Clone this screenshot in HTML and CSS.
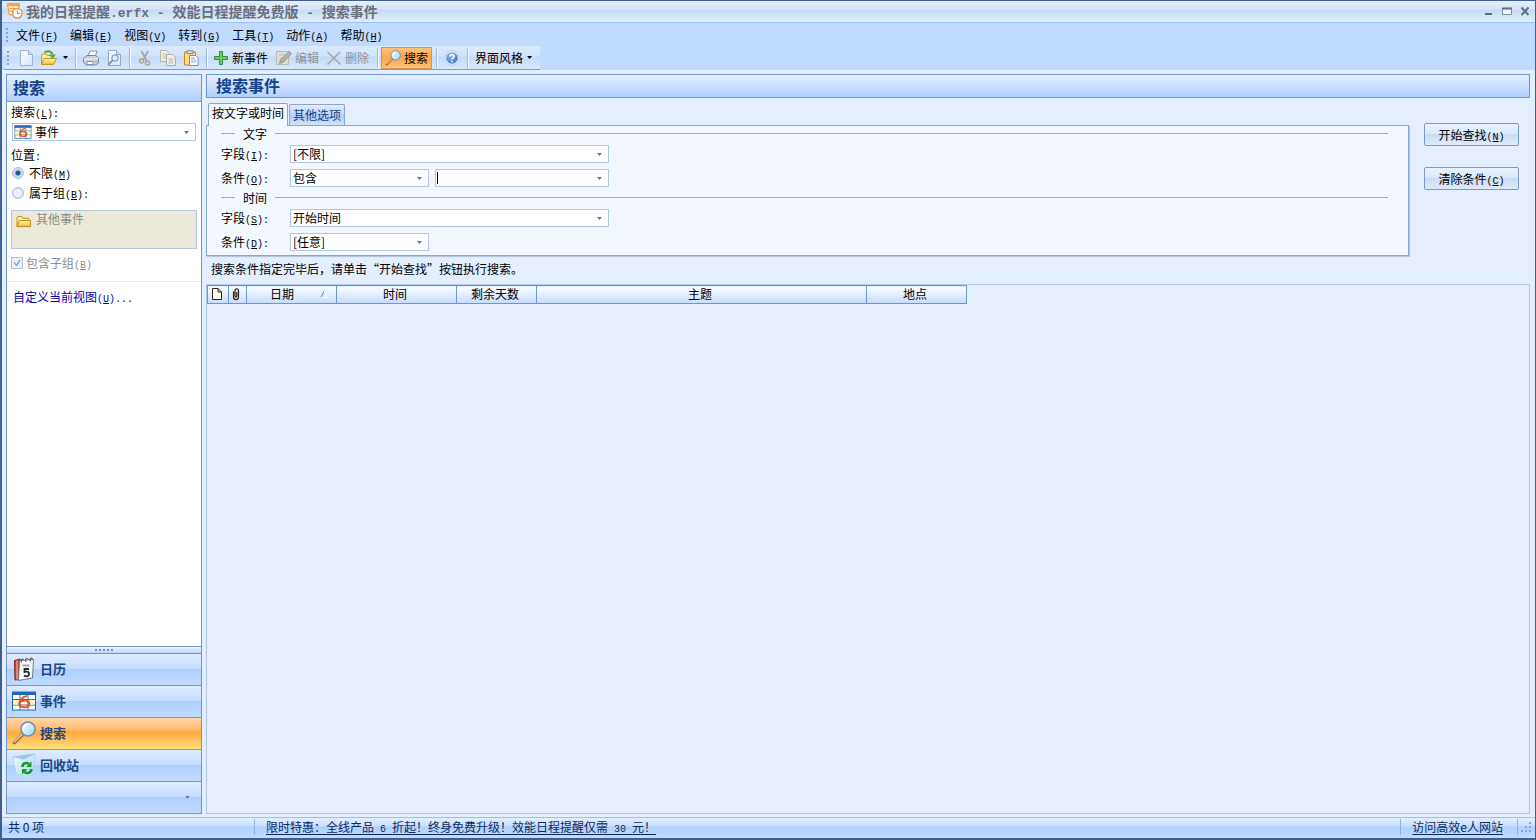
FILE: index.html
```html
<!DOCTYPE html>
<html lang="zh-CN">
<head>
<meta charset="utf-8">
<title>我的日程提醒.erfx - 效能日程提醒免费版 - 搜索事件</title>
<link rel="stylesheet" href="styles.css">
</head>
<body>
<svg class="defs" aria-hidden="true">
  <defs>
    <linearGradient id="gFolder" x1="0" y1="0" x2="0" y2="1"><stop offset="0" stop-color="#fff3a8"/><stop offset="1" stop-color="#eebc3c"/></linearGradient>
    <linearGradient id="gLens" x1="0" y1="0" x2="1" y2="1"><stop offset="0" stop-color="#ffffff"/><stop offset="1" stop-color="#9fd2f5"/></linearGradient>
    <linearGradient id="gPage" x1="0" y1="0" x2="1" y2="1"><stop offset="0" stop-color="#ffffff"/><stop offset="1" stop-color="#d5e5f8"/></linearGradient>
    <linearGradient id="gBin" x1="0" y1="0" x2="1" y2="1"><stop offset="0" stop-color="#f2fbff"/><stop offset="1" stop-color="#a9d8f3"/></linearGradient>
    <radialGradient id="gHelp" cx="0.4" cy="0.3" r="0.8"><stop offset="0" stop-color="#8fb4ee"/><stop offset="1" stop-color="#3d6fc4"/></radialGradient>
    <symbol id="lens" viewBox="0 0 24 24">
      <path d="M2.500 21.500 10.500 13.500" stroke="#94694a" stroke-width="3.600" stroke-linecap="round"/>
      <path d="M2.500 20.800 10 13.500" stroke="#efb47a" stroke-width="2" stroke-linecap="round"/>
      <circle cx="16" cy="8" r="7" fill="url(#gLens)" stroke="#6c8fb8" stroke-width="1.500"/>
      <path d="M11.500 7.500a4.500 4.500 0 0 1 4-4" fill="none" stroke="#fff" stroke-width="1.600"/>
    </symbol>
    <symbol id="grid" viewBox="0 0 24 20">
      <rect x="0.500" y="1" width="23" height="18" fill="#fff" stroke="#2667ae"/>
      <path d="M0 1h24v3H0z" fill="#1f66b5"/>
      <path d="M1 8.500h22M1 14h22M8 4v15M16 4v15" stroke="#3f7a62" fill="none"/>
      <path d="M1 9h6.500v4.500H1zM16.500 9h6v4.500h-6z" fill="#fff3c4"/>
      <path d="M15 5C11 5.500 7.500 9 7.200 13c0 4 9.500 4.500 10 .3.300-4-5.500-5.300-9.500-2" fill="none" stroke="#e8502a" stroke-width="2"/>
    </symbol>
    <symbol id="folder" viewBox="0 0 16 14">
      <path d="M1 12.500v-10l1-1h4l1.500 2H13l1 1v1.500" fill="#ffeb98" stroke="#b9860f"/>
      <path d="M1 12.500 3.500 6H15.500V12.500z" fill="url(#gFolder)" stroke="#b9860f"/>
    </symbol>
  </defs>
</svg>

<div class="window">
  <header class="titlebar">
    <svg class="app-icon" viewBox="0 0 18 18">
      <path d="M1.500 1.500h12.500l-1.500 12H3.500z" fill="#fff5df" stroke="#df8a31"/>
      <path d="M1 1h13.500v3.500H1.500z" fill="#f2a74a"/>
      <path d="M4 7h7M4 9.500h4" stroke="#df8a31"/>
      <circle cx="12" cy="12" r="5" fill="#fffdf8" stroke="#e08c3e" stroke-width="1.400"/>
      <path d="M12 9v3.200h2.700" fill="none" stroke="#7489a5"/>
    </svg>
    <h1 class="title">我的日程提醒<span class="tm">.erfx - </span>效能日程提醒免费版<span class="tm"> - </span>搜索事件</h1>
    <div class="win-buttons">
      <button aria-label="最小化"><svg viewBox="0 0 10 10"><path d="M1 8h7" stroke="#5f6d82" stroke-width="2"/></svg></button>
      <button aria-label="最大化"><svg viewBox="0 0 10 10"><path d="M.5 2.500h9v6h-9z" fill="#eef4fc" stroke="#7e8ca0"/><path d="M0 2.500h10" stroke="#5f6d82" stroke-width="2"/></svg></button>
      <button aria-label="关闭"><svg viewBox="0 0 10 10"><path d="M1.500 1.500l7 7.500M8.500 1.500l-7 7.500" stroke="#5f6d82" stroke-width="2"/></svg></button>
    </div>
  </header>

  <nav class="menubar" aria-label="菜单">
    <span class="grip"></span>
    <button>文件<span class="key">(<u>F</u>)</span></button>
    <button>编辑<span class="key">(<u>E</u>)</span></button>
    <button>视图<span class="key">(<u>V</u>)</span></button>
    <button>转到<span class="key">(<u>G</u>)</span></button>
    <button>工具<span class="key">(<u>T</u>)</span></button>
    <button>动作<span class="key">(<u>A</u>)</span></button>
    <button>帮助<span class="key">(<u>H</u>)</span></button>
  </nav>

  <div class="toolbar-row">
    <div class="toolbar" role="toolbar">
      <span class="grip"></span>
      <button class="tool" aria-label="新建"><svg viewBox="0 0 16 16"><path d="M2.500.5h8l4 4v11h-12z" fill="url(#gPage)" stroke="#9db3d4"/><path d="M10.500.5v4h4" fill="#c9daf0" stroke="#9db3d4"/></svg></button>
      <button class="tool" aria-label="打开"><svg viewBox="0 0 16 16"><path d="M.5 14V5l1-1h4l1 1.500H12V14z" fill="#ffe88c" stroke="#c39a2c"/><path d="M.5 14.500 3 8.500h12.500l-3 6z" fill="url(#gFolder)" stroke="#c39a2c"/><path d="M3.500 2.500C7 0 11 1.500 11.500 4.500" fill="none" stroke="#4ba83c" stroke-width="2"/><path d="M8 4.500h7L11.500 9z" fill="#4fb33e"/></svg></button>
      <button class="tool drop" aria-label="打开列表"><i class="arrow"></i></button>
      <span class="sep"></span>
      <button class="tool" aria-label="打印"><svg viewBox="0 0 16 16"><path d="M5 6 7 1h7l-2 6z" fill="#fff" stroke="#8392ab"/><path d="M.5 8.500 4 5.500h9l2.500 3V13l-3 2h-9L.5 12.500z" fill="#cbd0da" stroke="#7a8494"/><path d="M1 9h11l3-1" fill="none" stroke="#f8fafc"/><path d="M4 11.500h6v3H4z" fill="#fff" stroke="#8392ab"/><path d="M12 11.500h2" stroke="#e38a3c"/></svg></button>
      <button class="tool" aria-label="打印预览"><svg viewBox="0 0 16 16"><path d="M2.500.5h8l4 4v11h-12z" fill="url(#gPage)" stroke="#8ea6cc"/><path d="M10.500.5v4h4" fill="#d2e0f2" stroke="#8ea6cc"/><circle cx="9" cy="8" r="3.200" fill="#d9edff" stroke="#6888b6"/><path d="M6.500 10.500 2 15" stroke="#8a93a6" stroke-width="2"/></svg></button>
      <span class="sep"></span>
      <button class="tool" aria-label="剪切" disabled><svg viewBox="0 0 16 16"><path d="M4.500 1 9.500 10.500M11 1 6 10.500" stroke="#a3a7ac" stroke-width="1.800"/><circle cx="4.500" cy="11" r="2" fill="none" stroke="#b3a68c" stroke-width="1.600"/><circle cx="10.500" cy="13" r="2" fill="none" stroke="#b3a68c" stroke-width="1.600"/></svg></button>
      <button class="tool" aria-label="复制" disabled><svg viewBox="0 0 16 16"><path d="M.5.5h6l3 3v8h-9z" fill="#efeee8" stroke="#b9b6a6"/><path d="M2.500 4h4M2.500 6h4M2.500 8h4" stroke="#c6c3b5"/><path d="M6.500 4.500h6l3 3v8h-9z" fill="#efeee8" stroke="#b1ae9f"/><path d="M8.500 9h5M8.500 11h5M8.500 13h5" stroke="#bfbcae"/></svg></button>
      <button class="tool" aria-label="粘贴"><svg viewBox="0 0 16 16"><path d="M1.500 2h11v13h-11z" fill="#ffd982" stroke="#c18a2b"/><path d="M4 .8h6v2.700H4z" fill="#dce4ee" stroke="#7a8799"/><path d="M6.500 5.500h6l2.500 2v8H6.500z" fill="#fff" stroke="#6d92c8"/><path d="M8 8h4M8 10h5M8 12h5" stroke="#86a8d8"/></svg></button>
      <span class="sep"></span>
      <button class="tool text first"><svg viewBox="0 0 16 16"><path d="M6.500 1.500h3v5h5v3h-5v5h-3v-5h-5v-3h5z" fill="#6ccb5e" stroke="#2f9140"/></svg>新事件</button>
      <button class="tool text" disabled><svg viewBox="0 0 16 16"><path d="M.5 1.500h12v13H.5z" fill="#deddd8" stroke="#bbb9b2"/><path d="M3 5h6M3 8h4M3 11h6" stroke="#c2c0b8"/><path d="M13 1.500l2.500 2-8 8.500-4 1.500 1.500-4z" fill="#b5b4ae" stroke="#96958f"/></svg>编辑</button>
      <button class="tool text" disabled><svg viewBox="0 0 16 16"><path d="M1.500 2 14.500 14.500M14 2 1.500 14.500" stroke="#a5a6a8" stroke-width="1.600"/></svg>删除</button>
      <span class="sep"></span>
      <button class="tool text active"><svg><use href="#lens"/></svg>搜索</button>
      <span class="sep"></span>
      <button class="tool" aria-label="帮助"><svg viewBox="0 0 16 16"><circle cx="8" cy="8" r="7.300" fill="#e8effa" stroke="#b7c9e6"/><circle cx="8" cy="8" r="5.800" fill="url(#gHelp)"/><path d="M6 6.500C6 4 10 4 10 6.300 10 7.800 8 7.800 8 9.500M8 10.800v1.500" fill="none" stroke="#fff" stroke-width="1.600"/></svg></button>
      <span class="sep"></span>
      <button class="tool text style">界面风格<i class="arrow"></i></button>
    </div>
  </div>

  <div class="workspace">
    <aside class="sidebar">
      <h2 class="side-title">搜索</h2>
      <div class="side-body">
        <label for="what">搜索<span class="key">(<u>L</u>):</span></label>
        <div class="icon-select">
          <svg><use href="#grid"/></svg>
          <select id="what"><option>事件</option></select>
        </div>
        <div class="place">位置<span class="key">:</span></div>
        <label class="choice"><input type="radio" name="place" checked><span>不限<span class="key">(<u>M</u>)</span></span></label>
        <label class="choice"><input type="radio" name="place"><span>属于组<span class="key">(<u>B</u>):</span></span></label>
        <div class="group-list"><svg><use href="#folder"/></svg>其他事件</div>
        <label class="sub"><input type="checkbox" checked disabled><span>包含子组<span class="key">(<u>B</u>)</span></span></label>
      </div>
      <div class="custom"><a href="#">自定义当前视图<span class="key">(<u>U</u>)...</span></a></div>
      <div class="splitter"><i></i><i></i><i></i><i></i><i></i></div>
      <nav class="modules">
        <button><svg viewBox="0 0 24 24"><path d="M2.500 3.500 8 2v20.500l-5 .5z" fill="#cf4439" stroke="#7d2924"/><path d="M7.500 3.500 21.500 2.500l-1 18.500L6.500 23.500z" fill="#fdfdfd" stroke="#73777e"/><path d="M5 3.500v19" stroke="#e8c9c6"/><path d="M9.500 5.500c-1.500-3 1-5 2-2.500M14 5c-1.500-3 1-5 2-2.500M18.500 4.500c-1.500-3 1-5 2-2.500" fill="none" stroke="#3d3a3a"/><path d="M10.500 8.500h7" stroke="#a4a4a4" stroke-width="2"/><path d="M17 12h-4.500v3c4-1 4.500.5 4.500 2 0 2.500-3 3-5 1.500" fill="none" stroke="#252525" stroke-width="1.800"/></svg>日历</button>
        <button><svg><use href="#grid"/></svg>事件</button>
        <button class="active"><svg><use href="#lens"/></svg>搜索</button>
        <button><svg viewBox="0 0 24 24"><path d="M1 4 13 2.500 23 1l-2 20-6 2.500L4 21z" fill="url(#gBin)" stroke="#b4d8ef"/><path d="M1 4 14 1.500 23 1 12 6.500z" fill="#94c8ee"/><path d="M10.500 14c0-4 4-5 6.500-3" fill="none" stroke="#1c9a28" stroke-width="2.600"/><path d="M19.500 8.500v5.500h-5.500z" fill="#1c9a28"/><path d="M19.500 16c-.5 4-4.500 5-7 3" fill="none" stroke="#1c9a28" stroke-width="2.600"/><path d="M10 21.500V16h5.500z" fill="#1c9a28"/></svg>回收站</button>
        <button class="more" aria-label="配置按钮"><i class="arrow blue"></i></button>
      </nav>
    </aside>

    <main class="content">
      <h2 class="content-title">搜索事件</h2>
      <form class="query">
        <div class="criteria">
          <div class="tabs" role="tablist">
            <button type="button" role="tab" class="tab on" aria-selected="true">按文字或时间</button>
            <button type="button" role="tab" class="tab">其他选项</button>
          </div>
          <div class="page" role="tabpanel">
            <div class="legend">文字</div>
            <div class="fields">
              <label for="f1">字段<span class="key">(<u>I</u>):</span></label>
              <select id="f1" class="wide"><option>[不限]</option></select>
              <label for="c1">条件<span class="key">(<u>O</u>):</span></label>
              <select id="c1"><option>包含</option></select>
              <input type="text" class="combo" aria-label="条件内容">
            </div>
            <div class="legend">时间</div>
            <div class="fields">
              <label for="f2">字段<span class="key">(<u>S</u>):</span></label>
              <select id="f2" class="wide"><option>开始时间</option></select>
              <label for="c2">条件<span class="key">(<u>D</u>):</span></label>
              <select id="c2"><option>[任意]</option></select>
            </div>
          </div>
        </div>
        <div class="actions">
          <button type="button">开始查找<span class="key">(<u>N</u>)</span></button>
          <button type="button">清除条件<span class="key">(<u>C</u>)</span></button>
        </div>
      </form>
      <p class="hint">搜索条件指定完毕后，请单击“开始查找”按钮执行搜索。</p>
      <div class="results">
        <table>
          <colgroup><col class="w-doc"><col class="w-clip"><col class="w-date"><col class="w-time"><col class="w-days"><col class="w-subject"><col class="w-place"></colgroup>
          <thead><tr>
            <th aria-label="类型"><svg viewBox="0 0 12 14"><path d="M1.500 1.500h5.500l3.500 3.500v7.500h-9z" fill="#fffbe6" stroke="#222"/><path d="M7 1.500V5h3.500" fill="none" stroke="#222"/></svg></th>
            <th aria-label="附件"><svg viewBox="0 0 12 14"><path d="M3.500 4.500V10c0 3.500 5 3.500 5 0V4c0-3-3.500-3-3.500 0v5c0 1.500 1.800 1.500 1.800 0V5" fill="#fff2bb" stroke="#222" stroke-width="1.200"/></svg></th>
            <th><span class="sorted">日期<svg viewBox="0 0 8 8"><path d="M1 7.500 4.500.5" stroke="#6d86ad"/><path d="M4.500.5 7.500 7.500H1" fill="none" stroke="#fff"/></svg></span></th>
            <th>时间</th><th>剩余天数</th><th>主题</th><th>地点</th>
          </tr></thead>
        </table>
      </div>
    </main>
  </div>

  <footer class="status">
    <span class="count">共 0 项</span>
    <span class="promo"><a href="#">限时特惠：全线产品<span class="key"> 6 </span>折起！终身免费升级！效能日程提醒仅需<span class="key"> 30 </span>元！</a></span>
    <span class="site"><a href="#">访问高效e人网站</a></span>
    <svg class="size-grip" viewBox="0 0 12 12"><path d="M9 1h2v2H9zM5 5h2v2H5zM9 5h2v2H9zM1 9h2v2H1zM5 9h2v2H5zM9 9h2v2H9z" fill="#86a8d8"/></svg>
  </footer>
</div>
</body>
</html>
```

FILE: styles.css
```css
* { box-sizing: border-box; }

:root {
  --line: #6f97cf;
  --soft-line: #b0c8e4;
  --navy: #15428b;
  --caret: url("data:image/svg+xml,%3Csvg xmlns='http://www.w3.org/2000/svg' width='5' height='3'%3E%3Cpath d='M0 0h5L2.500 3z' fill='%235c7aa8'/%3E%3C/svg%3E");
}

body {
  margin: 0;
  font-family: "Noto Sans CJK SC", "Liberation Sans", sans-serif;
  font-size: 12px;
  line-height: 16px;
  color: #000;
}

button, select, input {
  font: inherit;
  color: inherit;
  margin: 0;
}

button {
  border: 0;
  background: none;
  padding: 0;
}

svg { display: block; }
.defs { position: absolute; width: 0; height: 0; }

.key {
  font-family: "Liberation Mono", monospace;
  font-size: 10px;
  line-height: 1;
  white-space: pre;
}

.window {
  display: flex;
  flex-direction: column;
  min-height: 100vh;
  background: #e3eefe;
  border: 1px solid #3f5f92;
  border-left-width: 2px;
  border-bottom-width: 2px;
}

/* Title bar */
.titlebar {
  display: flex;
  align-items: center;
  gap: 3px;
  height: 22px;
  padding: 0 5px 2px 4px;
  background: linear-gradient(#e6effb 0, #d7e4f7 8px, #c8daf3 9px, #e0edff 21px);
  border-bottom: 1px solid #a0c1ee;
}
.app-icon { width: 17px; height: 17px; }
.title {
  flex: 1;
  margin: 0;
  font-size: 14px;
  line-height: 18px;
  font-weight: bold;
  color: #69707c;
}
.tm {
  font-family: "Liberation Mono", monospace;
  font-size: 13px;
  line-height: 1;
  white-space: pre;
}
.win-buttons { display: flex; gap: 8px; }
.win-buttons svg { width: 10px; height: 10px; }

/* Menu and toolbar */
.menubar {
  display: flex;
  align-items: center;
  gap: 12px;
  height: 23px;
  padding-left: 4px;
  background: #bfdbff;
}
.menubar .grip { margin-right: -4px; }
.grip {
  width: 2px;
  height: 14px;
  background: repeating-linear-gradient(#7fa5dc 0 2px, transparent 2px 4px);
}
.toolbar-row {
  background: #bfdbff;
  padding-left: 1px;
}
.toolbar {
  display: flex;
  align-items: center;
  width: max-content;
  height: 24px;
  padding: 0 7px 0 4px;
  border-bottom: 1px solid #6f9ddb;
  border-radius: 3px 0 0 3px;
  background: linear-gradient(#dceaff 0, #d2e3fb 10px, #c4daf7 11px, #d9e9ff 23px);
}
.toolbar .grip { margin-right: 5px; }
.tool {
  display: flex;
  align-items: center;
  justify-content: center;
  gap: 3px;
  width: 23px;
  height: 22px;
  border: 1px solid transparent;
}
.tool svg { width: 16px; height: 16px; }
.tool:disabled { color: #8f9299; }
.tool.drop { width: 11px; }
.tool.text { width: auto; padding: 0 3px 0 2px; }
.tool.text.first { padding-right: 4px; }
.tool.text.active {
  padding: 0 3px;
  border-color: #d5964c;
  background: linear-gradient(#fdc27c, #fda64c 50%, #ffc273);
}
.tool.style { gap: 4px; padding: 0 0 0 3px; }
.arrow {
  width: 5px;
  height: 3px;
  background: #000;
  clip-path: polygon(0 0, 100% 0, 50% 100%);
}
.arrow.blue { background: #4f75ad; }
.sep {
  width: 2px;
  height: 20px;
  margin: 0 2px 0 4px;
  background: linear-gradient(90deg, #9abbe8 50%, #f3f8ff 50%);
}

/* Workspace */
.workspace {
  flex: 1;
  display: flex;
  gap: 4px;
  padding: 4px 5px 3px 4px;
}
.sidebar {
  display: flex;
  flex-direction: column;
  flex: none;
  width: 196px;
  border: 1px solid var(--line);
  background: #fff;
}
.side-title, .content-title {
  margin: 0;
  font-size: 16px;
  font-weight: bold;
  color: var(--navy);
  background: linear-gradient(#e3efff, #c7deff 60%, #aed1ff);
}
.side-title {
  padding: 0 0 2px 6px;
  line-height: 24px;
  border-bottom: 1px solid var(--line);
}
.side-body {
  display: flex;
  flex-direction: column;
  padding: 2px 4px 8px;
  border-bottom: 1px solid #dce9fb;
}
.icon-select {
  position: relative;
  display: grid;
  margin: 3px 1px 6px;
}
.icon-select svg {
  position: absolute;
  left: 2px;
  top: 2px;
  width: 18px;
  height: 14px;
}
.icon-select select { padding-left: 22px; }
.choice, .sub {
  display: flex;
  align-items: center;
  height: 20px;
}
.choice input {
  appearance: none;
  width: 12px;
  height: 12px;
  margin: 0 5px 0 1px;
  border: 1px solid #a5bedd;
  border-radius: 50%;
  background: radial-gradient(circle, #e9f1fb 40%, #c9dbf0);
}
.choice input:checked { background: radial-gradient(circle, #1c5c8c 0 2px, #b9d8ee 3px, #dbe9f8); }
.group-list {
  display: flex;
  gap: 5px;
  min-height: 39px;
  margin: 7px 0 4px;
  padding: 0 4px;
  border: 1px solid #b0c8e4;
  background: #ece9d8;
  color: #8d8c83;
}
.group-list svg { width: 15px; height: 13px; margin-top: 4px; }
.sub { color: #8d8d8d; }
.sub input {
  appearance: none;
  width: 12px;
  height: 12px;
  margin: 0 3px 0 0;
  border: 1px solid #a9bfdb;
  background: #e8f0fa url("data:image/svg+xml,%3Csvg xmlns='http://www.w3.org/2000/svg' width='10' height='10'%3E%3Cpath d='M2 4.500l2.500 3L8 2' fill='none' stroke='%2392aac9' stroke-width='1.600'/%3E%3C/svg%3E") center no-repeat;
}
.custom { flex: 1; padding: 7px 6px; }
.custom a { color: #0000b8; text-decoration: none; }
.splitter {
  display: flex;
  align-items: center;
  justify-content: center;
  gap: 2px;
  height: 7px;
  border-top: 1px solid var(--line);
  background: linear-gradient(#f0f6ff, #b9d5fb);
}
.splitter i { width: 2px; height: 2px; background: #7991b4; }
.modules button {
  display: flex;
  align-items: center;
  gap: 4px;
  width: 100%;
  height: 32px;
  padding: 0 0 1px 5px;
  border-top: 1px solid var(--line);
  font-size: 13px;
  font-weight: bold;
  color: #1e4785;
  background: linear-gradient(#dfecff, #c7deff 48%, #add1ff 50%, #c0dbff);
}
.modules svg { width: 24px; height: 24px; }
.modules .active { background: linear-gradient(#ffd9aa, #ffbb6e 36%, #ffab3f 48%, #fee17b); }
.modules .more { justify-content: flex-end; padding-right: 11px; }

/* Drop-downs */
select, .combo {
  appearance: none;
  width: 100%;
  height: 18px;
  padding: 0 14px 0 2px;
  border: 1px solid var(--soft-line);
  border-radius: 0;
  outline: 0;
  line-height: 16px;
  background: #fff var(--caret) right 6px center no-repeat;
}
.combo {
  background:
    var(--caret) right 6px center no-repeat,
    linear-gradient(#000, #000) 1px center / 1px 12px no-repeat,
    #fff;
}

/* Search form */
.content {
  flex: 1;
  display: flex;
  flex-direction: column;
  min-width: 0;
}
.content-title {
  padding: 0 0 2px 9px;
  line-height: 20px;
  border: 1px solid var(--line);
}
.query {
  display: flex;
  gap: 15px;
  padding: 5px 11px 0 0;
}
.criteria { flex: 1; }
.tabs {
  display: flex;
  align-items: flex-end;
  gap: 1px;
  padding-left: 2px;
}
.tab {
  height: 21px;
  padding: 0 3px;
  border: 1px solid #8ca5cc;
  border-bottom: 0;
  border-radius: 2px 2px 0 0;
  color: var(--navy);
  background: linear-gradient(#e1edfd, #b4cdf3 60%, #d6e5fb);
}
.tab.on {
  position: relative;
  height: 23px;
  margin-bottom: -1px;
  padding: 0 3px 4px;
  color: #000;
  background: #f3f8fe;
}
.page {
  padding: 0 20px 4px 14px;
  border: 1px solid #8ca5cc;
  background: #f3f8fe;
  box-shadow: 1px 1px 1px #b7c6db;
}
.legend {
  display: flex;
  align-items: center;
  gap: 8px;
  height: 15px;
  margin-bottom: 4px;
}
.legend::before, .legend::after {
  content: "";
  width: 14px;
  height: 1px;
  background: #aaa6a2;
}
.legend::after { flex: 1; }
.fields + .legend { margin-top: 3px; }
.fields {
  display: grid;
  grid-template-columns: 63px 139px 174px;
  gap: 6px;
  align-items: center;
}
.fields label { height: 18px; line-height: 18px; }
.wide { grid-column: span 2; }
.actions {
  display: flex;
  flex-direction: column;
  gap: 21px;
  width: 95px;
  padding-top: 20px;
}
.actions button {
  height: 23px;
  border: 1px solid #7b9ac6;
  border-radius: 2px;
  background: linear-gradient(#e9f2fe, #dce9fb 48%, #cadcf4 50%, #dfebfc);
}
.hint { margin: 5px 6px 7px 5px; }
.results {
  flex: 1;
  border: 1px solid var(--soft-line);
}

/* Result list */
table {
  table-layout: fixed;
  width: 760px;
  border-collapse: collapse;
}
th {
  height: 18px;
  padding: 0 3px 1px 0;
  border: 1px solid var(--line);
  font-weight: normal;
  line-height: 16px;
  background: linear-gradient(#fafdff, #dceaff 60%, #c5dcfc);
}
th > svg { width: 12px; height: 14px; margin: 0 auto; }
.w-doc { width: 21px; }
.w-clip { width: 18px; }
.w-date { width: 90px; }
.w-time { width: 120px; }
.w-days { width: 80px; }
.w-subject { width: 330px; }
.w-place { width: 100px; }
.sorted {
  display: flex;
  align-items: center;
  justify-content: flex-end;
  gap: 26px;
  padding-right: 5px;
}
.sorted svg { width: 8px; height: 8px; }

/* Status bar */
.status {
  display: flex;
  align-items: center;
  height: 21px;
  padding: 0 3px 2px 0;
  border-top: 1px solid #9fc0ea;
  color: #0f2a5c;
  background: linear-gradient(#e3efff 0, #c7deff 8px, #add1ff 9px, #c2dcff);
}
.status a { color: inherit; text-underline-offset: 2px; }
.count { width: 252px; padding-left: 6px; }
.promo {
  flex: 1;
  padding-left: 11px;
  border-left: 1px solid #8fb2e0;
}
.site {
  padding: 0 14px 0 11px;
  border-left: 1px solid #8fb2e0;
  border-right: 1px solid #8fb2e0;
}
.size-grip { width: 12px; height: 12px; margin-left: 2px; }
```
